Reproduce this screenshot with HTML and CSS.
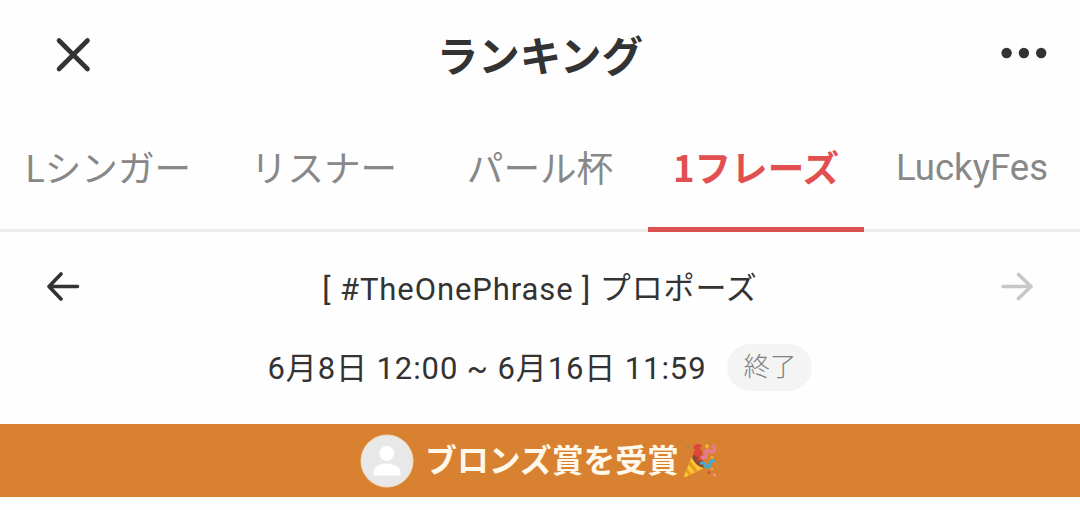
FILE: index.html
```html
<!DOCTYPE html>
<html lang="ja">
<head>
<meta charset="utf-8">
<title>ランキング</title>
<link rel="stylesheet" href="styles.css">
</head>
<body>
<header class="header">
  <svg class="close" viewBox="0 0 36 36"><path d="M4 3.500 32.500 32M32.500 3.500 4 32"/></svg>
  <h1 class="title">ランキング</h1>
  <svg class="more" viewBox="0 0 46 12"><circle cx="5.6" cy="6" r="5.2"/><circle cx="22.9" cy="6" r="5.2"/><circle cx="40.2" cy="6" r="5.2"/></svg>
</header>
<nav class="tabs">
  <a class="tab"><span>Lシンガー</span></a>
  <a class="tab"><span>リスナー</span></a>
  <a class="tab"><span>パール杯</span></a>
  <a class="tab active"><span>1フレーズ</span></a>
  <a class="tab latin"><span>LuckyFes</span></a>
</nav>
<section class="event">
  <div class="event-row">
    <svg class="arrow" viewBox="0 0 34 30"><path d="M15 2 3 14.500 15 27M3 14.500H31.500"/></svg>
    <span class="event-name">[ #TheOnePhrase ] <span class="phrase">プロポーズ</span></span>
    <svg class="arrow next" viewBox="0 0 34 30"><path d="M18.500 2.500 31 14.500 18.500 26.500M31 14.500H3"/></svg>
  </div>
  <div class="date-row">
    <span class="dates">6月8日 12:00 ~ 6月16日 11:59</span>
    <span class="badge">終了</span>
  </div>
</section>
<div class="award">
  <svg class="avatar" viewBox="0 0 54 54"><circle cx="27" cy="27" r="26" fill="#e8e8e8" stroke="#f3d9c3"/><circle cx="26.7" cy="19.5" r="7.4" fill="#fff"/><path fill="#fff" d="M13.500 41.500V39c0-6 5.500-9.500 13.200-9.500S40.500 33 40.500 39v2.500Z"/></svg>
  <span class="award-text">ブロンズ賞を受賞</span>
  <svg class="party" viewBox="0 0 34 36">
    <path fill="#fcc534" d="M9.5 12 1.2 32.5c-.3 1 .5 1.8 1.5 1.4L22 24.5C17.5 22 12 17 9.5 12Z"/>
    <path fill="#e99b22" d="m7 18 8 10-3 1.5-6.5-8ZM4 25.500l4.500 5.500-2.500 1.200-3.200-3.700Z"/>
    <ellipse cx="15.700" cy="18.300" rx="8.500" ry="3.600" transform="rotate(44 15.700 18.300)" fill="#8b4a32"/>
    <path fill="none" stroke="#dc4638" stroke-width="3.400" stroke-linecap="round" d="M17 3c-5-1-6.500 2-3 3.200 5 1.500 5 5.500.5 5.800-3.500.2-3-3.500 0-3 4 1 4 5.500 1.500 7.500"/>
    <path fill="none" stroke="#e77b91" stroke-width="3.300" stroke-linecap="round" d="M30.500 3c2.500 4.500-.5 7-3 5.500-3-2-6-1-4.500 2 1 3-1 4.500-4 4"/>
    <path fill="none" stroke="#4ba9c9" stroke-width="3.300" stroke-linecap="round" d="M31 18c-4-1-4 2-4 4s-4 3-5 .2c-.5-2.200-2-2.600-3.500-2.200"/>
    <path fill="#f4bd35" d="m24 1 2.200 2.200L24 5.400 21.800 3.200ZM28.500 13l2 1-1 2-2-1Z"/>
    <circle cx="5" cy="4" r="1.600" fill="#9a8a55"/><circle cx="7.500" cy="8.500" r="1.300" fill="#e96d52"/><circle cx="26" cy="29.500" r="1.600" fill="#d94d45"/><circle cx="31.500" cy="32" r="1.500" fill="#e494a6"/><circle cx="29" cy="26" r="1.100" fill="#f5c348"/>
  </svg>
</div>
</body>
</html>
```
FILE: styles.css
```css
* { box-sizing: border-box; }
body { margin: 0; height: 510px; overflow: hidden; background: #fefefe; color: #333; font-family: Roboto, "Noto Sans CJK JP", sans-serif; }
svg { display: block; flex: none; }
.header { height: 110px; padding: 0 33px 0 55px; display: grid; grid-template-columns: 46px 1fr 46px; align-items: center; }
.close { width: 36px; height: 36px; fill: none; stroke: #333; stroke-width: 4.6; stroke-linecap: round; }
.title { margin: 0 0 2px; padding-right: 22px; text-align: center; font: bold 41.5px/60px "Noto Sans CJK JP", sans-serif; letter-spacing: 0; white-space: nowrap; }
.more { width: 46px; height: 12px; margin-top: -5px; fill: #333; }
.tabs { height: 122px; display: grid; grid-template-columns: repeat(5, 1fr); box-shadow: inset 0 -3px #ececec; }
.tab { padding-top: 31px; text-align: center; color: #888; font: 36.6px/52px "Noto Sans CJK JP", sans-serif; white-space: nowrap; }
.tab.latin { padding-top: 32px; font-family: Roboto, sans-serif; }
.active { color: #e24f50; font-weight: bold; border-bottom: 5px solid #d9504f; }
.event { height: 192px; }
.event-row { height: 110px; padding: 0 46px; display: flex; align-items: center; justify-content: space-between; }
.arrow { width: 34px; height: 30px; fill: none; stroke: #333; stroke-width: 3.6; stroke-linecap: round; stroke-linejoin: round; }
.next { stroke: #c7c7c7; }
.event-name, .dates { padding-top: 4px; font-size: 31px; line-height: 46px; letter-spacing: .9px; white-space: nowrap; }
.event-name { padding-top: 5px; }
.phrase { vertical-align: 1px; line-height: 1; }
.date-row { height: 50px; display: flex; align-items: center; justify-content: center; gap: 21px; }
.badge { width: 85px; height: 47px; border-radius: 24px; background: #f4f4f4; color: #808080; text-align: center; font: 300 26.5px/41px "Noto Sans CJK JP", sans-serif; }
.award { height: 73px; padding-right: 3px; background: #d88231; display: flex; align-items: center; justify-content: center; }
.avatar { width: 54px; height: 54px; margin: 0 11px 0 0; }
.award-text { margin-bottom: 5px; color: #fff9ec; font: bold 31.8px/48px "Noto Sans CJK JP", sans-serif; white-space: nowrap; }
.party { width: 34px; height: 36px; margin: 1px 0 0 4px; }
```
